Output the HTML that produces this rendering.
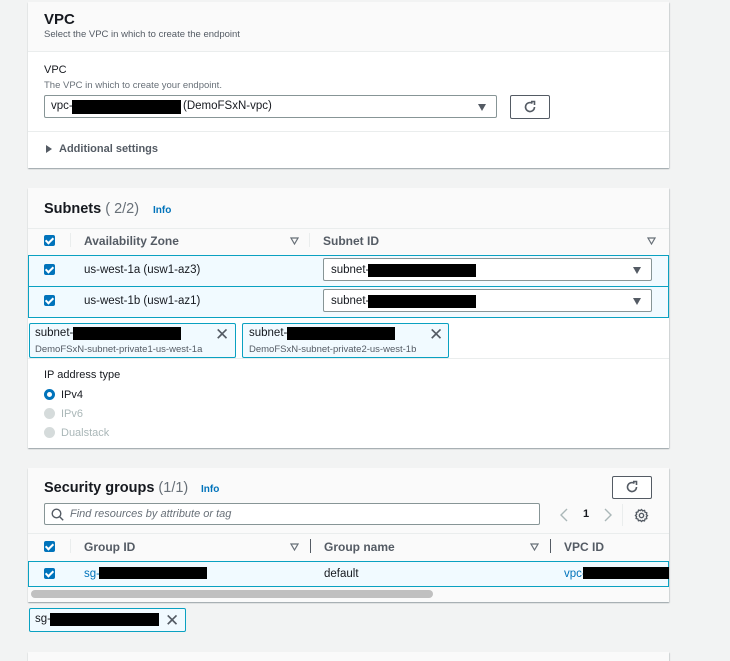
<!DOCTYPE html>
<html><head><meta charset="utf-8"><style>
*{box-sizing:border-box;margin:0;padding:0}
html{width:730px;height:661px;overflow:hidden}
body{width:730px;height:661px;background:#f2f3f3;font-family:"Liberation Sans",sans-serif;color:#16191f;position:relative;overflow:hidden;font-size:12px}
.a{position:absolute}
.panel{position:absolute;left:28px;width:641px;background:#fff;box-shadow:0 1px 1px rgba(0,28,36,.3),1px 1px 1px rgba(0,28,36,.1);}
.hd{background:#fafafa}
.line{position:absolute;left:0;right:0;height:1px;background:#eaeded}
.blk{position:absolute;background:#000}
.cb{position:absolute;width:11px;height:11px;background:#0073bb;border-radius:2px}
.cb:after{content:"";position:absolute;left:3px;top:1px;width:3px;height:6px;border:solid #fff;border-width:0 2px 2px 0;transform:rotate(45deg)}
.sel{position:absolute;border:1px solid #879596;background:#fff;border-radius:2px}
.tri{position:absolute;width:0;height:0;border-left:4.5px solid transparent;border-right:4.5px solid transparent;border-top:7px solid #545b64}
.otri{position:absolute;width:9px;height:8px}
.th{position:absolute;font-weight:bold;color:#545b64;font-size:12px}
.tok{position:absolute;border:1px solid #0aa1c1;background:#f1faff;border-radius:2px}
.x{position:absolute;font-size:17px;color:#545b64;line-height:1}
.row{position:absolute;left:0;right:0;background:#f1faff;border:1px solid #0aa1c1}
.info{color:#0073bb;font-weight:bold;font-size:10px}
</style></head><body>

<div class="panel" style="top:2px;height:166px">
 <div class="hd a" style="left:0;right:0;top:0;height:49px"></div>
 <div class="line" style="top:49px"></div>
 <div class="a" style="left:16px;top:9px;font-size:15px;font-weight:bold">VPC</div>
 <div class="a" style="left:16px;top:27px;font-size:9.5px;color:#545b64">Select the VPC in which to create the endpoint</div>
 <div class="a" style="left:16px;top:62px;font-size:11px">VPC</div>
 <div class="a" style="left:16px;top:78px;font-size:9.5px;color:#687078">The VPC in which to create your endpoint.</div>
 <div class="sel" style="left:16px;top:93px;width:453px;height:23px"></div>
 <div class="a" style="left:23px;top:98px;font-size:11.5px">vpc-</div>
 <div class="blk" style="left:44px;top:98px;width:109px;height:14px"></div>
 <div class="a" style="left:155px;top:98px;font-size:11.5px">(DemoFSxN-vpc)</div>
 <div class="tri" style="left:450px;top:102px"></div>
 <div class="a" style="left:482px;top:93px;width:40px;height:24px;border:1px solid #545b64;border-radius:2px"></div>
 <svg class="a" style="left:495px;top:98px" width="14" height="14" viewBox="0 0 14 14"><path d="M11.5 7A4.5 4.5 0 1 1 9.5 3.3" fill="none" stroke="#545b64" stroke-width="1.6"/><path d="M8 1.5h3.5v3.5" fill="none" stroke="#545b64" stroke-width="1.6"/></svg>
 <div class="line" style="top:129px"></div>
 <div class="a" style="left:18px;top:143px;width:0;height:0;border-top:4px solid transparent;border-bottom:4px solid transparent;border-left:6px solid #545b64"></div>
 <div class="a" style="left:31px;top:141px;font-size:11px;font-weight:bold;color:#545b64">Additional settings</div>
</div>

<div class="panel" style="top:188px;height:260px">
 <div class="hd a" style="left:0;right:0;top:0;height:129px"></div>
 <div class="a" style="left:16px;top:13px;font-size:14.5px;font-weight:bold">Subnets <span style="font-weight:normal;color:#687078">( 2/2)</span></div>
 <div class="a info" style="left:125px;top:17px">Info</div>
 <div class="line" style="top:40px"></div>
 <div class="cb" style="left:16px;top:47px"></div>
 <div class="a" style="left:42px;top:45px;width:1px;height:14px;background:#eaeded"></div>
 <div class="th" style="left:56px;top:46px">Availability Zone</div>
 <svg class="otri" style="left:262px;top:49px" viewBox="0 0 9 8"><path d="M1 1h7L4.5 7z" fill="none" stroke="#687078" stroke-width="1.2"/></svg>
 <div class="a" style="left:281px;top:45px;width:1px;height:14px;background:#eaeded"></div>
 <div class="th" style="left:295px;top:46px">Subnet ID</div>
 <svg class="otri" style="left:619px;top:49px" viewBox="0 0 9 8"><path d="M1 1h7L4.5 7z" fill="none" stroke="#687078" stroke-width="1.2"/></svg>
 <div class="row" style="top:67px;height:32px"></div>
 <div class="row" style="top:98px;height:32px"></div>
 <div class="cb" style="left:16px;top:76px"></div>
 <div class="a" style="left:56px;top:76px;font-size:11.5px">us-west-1a (usw1-az3)</div>
 <div class="sel" style="left:295px;top:70px;width:329px;height:23px"></div>
 <div class="a" style="left:303px;top:76px;font-size:11.5px">subnet-</div>
 <div class="blk" style="left:340px;top:76px;width:108px;height:13px"></div>
 <div class="tri" style="left:605px;top:79px"></div>
 <div class="cb" style="left:16px;top:107px"></div>
 <div class="a" style="left:56px;top:107px;font-size:11.5px">us-west-1b (usw1-az1)</div>
 <div class="sel" style="left:295px;top:101px;width:329px;height:23px"></div>
 <div class="a" style="left:303px;top:107px;font-size:11.5px">subnet-</div>
 <div class="blk" style="left:340px;top:107px;width:108px;height:13px"></div>
 <div class="tri" style="left:605px;top:110px"></div>
 <div class="line" style="top:170px"></div>
 <div class="a" style="left:16px;top:181px;font-size:11px">IP address type</div>
 <div class="a" style="left:16px;top:201px;width:11px;height:11px;border-radius:50%;border:3px solid #0073bb;background:#fff"></div>
 <div class="a" style="left:33px;top:201px;font-size:11px">IPv4</div>
 <div class="a" style="left:16px;top:220px;width:11px;height:11px;border-radius:50%;background:#d5dbdb"></div>
 <div class="a" style="left:33px;top:220px;font-size:11px;color:#aab7b8">IPv6</div>
 <div class="a" style="left:16px;top:239px;width:11px;height:11px;border-radius:50%;background:#d5dbdb"></div>
 <div class="a" style="left:33px;top:239px;font-size:11px;color:#aab7b8">Dualstack</div>
</div>
<div class="tok" style="left:29px;top:323px;width:207px;height:35px"></div>
<div class="a" style="left:35px;top:327px;font-size:11.5px">subnet-</div>
<div class="blk" style="left:73px;top:327px;width:108px;height:13px"></div>
<div class="x" style="left:215px;top:326px">✕</div>
<div class="a" style="left:35px;top:344px;font-size:9.5px;color:#545b64">DemoFSxN-subnet-private1-us-west-1a</div>
<div class="tok" style="left:242px;top:323px;width:207px;height:35px"></div>
<div class="a" style="left:249px;top:327px;font-size:11.5px">subnet-</div>
<div class="blk" style="left:287px;top:327px;width:108px;height:13px"></div>
<div class="x" style="left:429px;top:326px">✕</div>
<div class="a" style="left:249px;top:344px;font-size:9.5px;color:#545b64">DemoFSxN-subnet-private2-us-west-1b</div>

<div class="panel" style="top:468px;height:134px;background:#fafafa">
 <div class="a" style="left:16px;top:12px;font-size:14.5px;font-weight:bold">Security groups <span style="font-weight:normal;color:#687078">(1/1)</span></div>
 <div class="a info" style="left:173px;top:16px">Info</div>
 <div class="a" style="left:584px;top:8px;width:40px;height:23px;border:1px solid #545b64;border-radius:2px;background:#fff"></div>
 <svg class="a" style="left:597px;top:12px" width="14" height="14" viewBox="0 0 14 14"><path d="M11.5 7A4.5 4.5 0 1 1 9.5 3.3" fill="none" stroke="#545b64" stroke-width="1.6"/><path d="M8 1.5h3.5v3.5" fill="none" stroke="#545b64" stroke-width="1.6"/></svg>
 <div class="a" style="left:16px;top:35px;width:496px;height:22px;border:1px solid #879596;border-radius:2px;background:#fff"></div>
 <svg class="a" style="left:23px;top:40px" width="13" height="13" viewBox="0 0 13 13"><circle cx="5.5" cy="5.5" r="4.3" fill="none" stroke="#545b64" stroke-width="1.4"/><path d="M8.7 8.7l3.5 3.5" stroke="#545b64" stroke-width="1.4"/></svg>
 <div class="a" style="left:42px;top:40px;font-size:11px;font-style:italic;color:#687078">Find resources by attribute or tag</div>
 <svg class="a" style="left:531px;top:40px" width="10" height="14" viewBox="0 0 10 14"><path d="M8 1L2 7l6 6" fill="none" stroke="#aab7b8" stroke-width="1.4"/></svg>
 <div class="a" style="left:555px;top:40px;font-size:11px;font-weight:bold">1</div>
 <svg class="a" style="left:575px;top:40px" width="10" height="14" viewBox="0 0 10 14"><path d="M2 1l6 6-6 6" fill="none" stroke="#aab7b8" stroke-width="1.4"/></svg>
 <div class="a" style="left:594px;top:36px;width:1px;height:22px;background:#eaeded"></div>
 <div class="line" style="top:65px"></div>
 <div class="cb" style="left:16px;top:73px"></div>
 <div class="a" style="left:42px;top:71px;width:1px;height:14px;background:#eaeded"></div>
 <div class="th" style="left:56px;top:72px">Group ID</div>
 <svg class="otri" style="left:262px;top:75px" viewBox="0 0 9 8"><path d="M1 1h7L4.5 7z" fill="none" stroke="#687078" stroke-width="1.2"/></svg>
 <div class="a" style="left:282px;top:71px;width:1px;height:14px;background:#545b64"></div>
 <div class="th" style="left:296px;top:72px">Group name</div>
 <svg class="otri" style="left:502px;top:75px" viewBox="0 0 9 8"><path d="M1 1h7L4.5 7z" fill="none" stroke="#687078" stroke-width="1.2"/></svg>
 <div class="a" style="left:522px;top:71px;width:1px;height:14px;background:#545b64"></div>
 <div class="th" style="left:536px;top:72px">VPC ID</div>
 <div class="row" style="top:93px;height:26px"></div>
 <div class="cb" style="left:16px;top:100px"></div>
 <div class="a" style="left:56px;top:100px;font-size:11.5px;color:#0073bb">sg-</div>
 <div class="blk" style="left:71px;top:99px;width:108px;height:12px"></div>
 <div class="a" style="left:296px;top:100px;font-size:11.5px">default</div>
 <div class="a" style="left:536px;top:100px;font-size:11.5px;color:#0073bb">vpc-</div>
 <div class="blk" style="left:555px;top:99px;width:86px;height:12px"></div>
 <div class="a" style="left:3px;top:122px;width:402px;height:8px;border-radius:4px;background:#c0c0c0"></div>
</div>
<svg class="a" style="left:634px;top:508px" width="15" height="15" viewBox="0 0 16 16"><circle cx="8" cy="8" r="2.3" fill="none" stroke="#545b64" stroke-width="1.5"/><path d="M8 1.5l1.3 1.6 2-.6.4 2 2 .6-.6 2L14.5 8l-1.4 1.3.6 2-2 .5-.5 2-2-.6L8 14.5l-1.3-1.4-2 .6-.5-2-2-.5.6-2L1.5 8l1.4-1.3-.6-2 2-.5.5-2 2 .6z" fill="none" stroke="#545b64" stroke-width="1.4" stroke-linejoin="round"/></svg>
<div class="tok" style="left:29px;top:608px;width:157px;height:24px"></div>
<div class="a" style="left:35px;top:613px;font-size:11.5px">sg-</div>
<div class="blk" style="left:50px;top:613px;width:109px;height:13px"></div>
<div class="x" style="left:165px;top:612px">✕</div>

<div class="panel" style="top:652px;height:9px;background:#fafafa"></div>
</body></html>
